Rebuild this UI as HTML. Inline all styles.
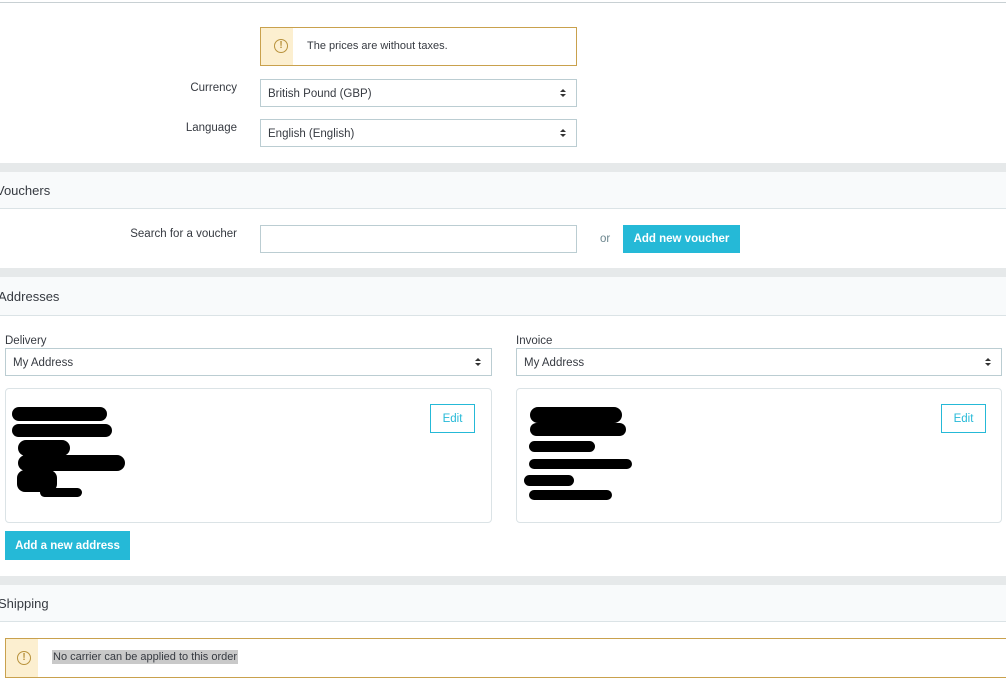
<!DOCTYPE html>
<html><head><style>
*{box-sizing:border-box;margin:0;padding:0}
body{width:1006px;height:669px;overflow:hidden;background:#fff;font-family:"Liberation Sans",sans-serif;font-size:11.5px;color:#363a41;position:relative}
.a{position:absolute}
.sel{position:absolute;border:1px solid #bbcdd2;background:#fff;padding-left:7px;display:flex;align-items:center;font-size:11.5px;padding-top:1px}
.sel:after{content:"";position:absolute;right:10px;top:50%;margin-top:-4px;border-left:3px solid transparent;border-right:3px solid transparent;border-bottom:3px solid #333;height:0}
.sel:before{content:"";position:absolute;right:10px;top:50%;margin-top:1px;border-left:3px solid transparent;border-right:3px solid transparent;border-top:3px solid #333;height:0}
.lbl{position:absolute;text-align:right;width:237px;left:0;font-size:11.5px}
.sep{position:absolute;left:0;width:1006px;height:9px;background:#e6e9ea}
.hdr{position:absolute;left:0;width:1006px;background:#f8fafb;border-bottom:1px solid #dbe3e6;font-size:13px;padding-left:0;display:flex;align-items:center}
.btn{position:absolute;background:#25b9d7;color:#fff;font-weight:bold;font-size:11.5px;display:flex;align-items:center;justify-content:center}
.card{position:absolute;border:1px solid #dbe3e6;border-radius:4px;background:#fff}
.edit{position:absolute;border:1px solid #25b9d7;color:#25b9d7;font-size:11.5px;display:flex;align-items:center;justify-content:center;width:45px;height:29px}
.ink{position:absolute;background:#000;border-radius:8px}
.warn{position:absolute;border:1px solid #c9a14d;background:#fff}
.band{position:absolute;left:0;top:0;bottom:0;width:32px;background:#fcefd0}
.ic{position:absolute;width:14px;height:14px;border:1.5px solid #b8923c;border-radius:50%;color:#b8923c;font-size:10px;font-weight:bold;text-align:center;line-height:11px}
</style></head><body>
<div class="a" style="left:0;top:2px;width:1006px;height:1px;background:#c8d0d3"></div>
<div class="warn" style="left:260px;top:27px;width:317px;height:39px"><div class="band"></div><div class="ic" style="left:13px;top:11px">!</div><div class="a" style="left:46px;top:12px;font-size:11px">The prices are without taxes.</div></div>
<div class="lbl" style="top:82px">Currency</div>
<div class="sel" style="left:260px;top:79px;width:317px;height:28px">British Pound (GBP)</div>
<div class="lbl" style="top:122px">Language</div>
<div class="sel" style="left:260px;top:119px;width:317px;height:28px">English (English)</div>
<div class="sep" style="top:163px"></div>
<div class="hdr" style="top:172px;height:37px"><span style="margin-left:-4px">Vouchers</span></div>
<div class="lbl" style="top:228px">Search for a voucher</div>
<div class="a" style="left:260px;top:225px;width:317px;height:28px;border:1px solid #bbcdd2"></div>
<div class="a" style="left:600px;top:233px;color:#6c868e">or</div>
<div class="btn" style="left:623px;top:225px;width:117px;height:28px">Add new voucher</div>
<div class="sep" style="top:268px"></div>
<div class="hdr" style="top:277px;height:39px"><span style="margin-left:-2px">Addresses</span></div>
<div class="a" style="left:5px;top:335px">Delivery</div>
<div class="sel" style="left:5px;top:348px;width:487px;height:28px">My Address</div>
<div class="a" style="left:516px;top:335px">Invoice</div>
<div class="sel" style="left:516px;top:348px;width:486px;height:28px">My Address</div>
<div class="card" style="left:5px;top:388px;width:487px;height:135px"><div class="edit" style="left:424px;top:15px">Edit</div></div>
<div class="ink" style="left:12px;top:407px;width:95px;height:14px"></div>
<div class="ink" style="left:12px;top:424px;width:100px;height:13px"></div>
<div class="ink" style="left:18px;top:440px;width:52px;height:16px"></div>
<div class="ink" style="left:18px;top:455px;width:107px;height:16px"></div>
<div class="ink" style="left:17px;top:470px;width:40px;height:22px"></div>
<div class="ink" style="left:40px;top:488px;width:42px;height:9px"></div>
<div class="card" style="left:516px;top:388px;width:486px;height:135px"><div class="edit" style="left:424px;top:15px">Edit</div></div>
<div class="ink" style="left:530px;top:407px;width:92px;height:16px"></div>
<div class="ink" style="left:530px;top:423px;width:96px;height:13px"></div>
<div class="ink" style="left:529px;top:441px;width:66px;height:11px"></div>
<div class="ink" style="left:529px;top:459px;width:103px;height:10px"></div>
<div class="ink" style="left:524px;top:475px;width:50px;height:11px"></div>
<div class="ink" style="left:529px;top:490px;width:83px;height:10px"></div>
<div class="btn" style="left:5px;top:531px;width:125px;height:29px">Add a new address</div>
<div class="sep" style="top:576px"></div>
<div class="hdr" style="top:585px;height:37px"><span style="margin-left:-2px">Shipping</span></div>
<div class="warn" style="left:5px;top:638px;width:1010px;height:40px"><div class="band"></div><div class="ic" style="left:11px;top:12px">!</div><div class="a" style="left:46px;top:11px;font-size:11px;background:#c9c9c9;padding:1px 1px">No carrier can be applied to this order</div></div>
</body></html>
